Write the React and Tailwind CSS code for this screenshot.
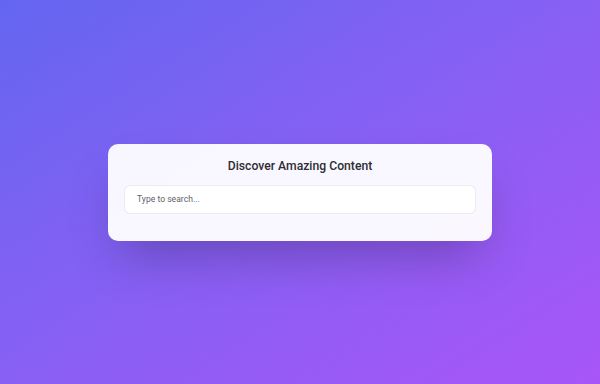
export default function App() {
  return (
    <div
      className="min-h-screen w-full bg-gradient-to-br from-[#6366f1] to-[#a855f7] flex items-center justify-center"
      style={{ fontFamily: 'Roboto, "Noto Sans", sans-serif' }}
    >
      <div className="w-[384px] rounded-[10px] bg-white/95 shadow-2xl px-4 pt-[12px] pb-[27px]">
        <h2 className="text-center text-[12.2px] font-medium leading-5 text-[#2d2d33]">
          Discover Amazing Content
        </h2>
        <input
          type="text"
          placeholder="Type to search..."
          className="mt-[9px] w-full h-[29px] rounded-md border border-gray-200/80 bg-white px-3 text-[8.6px] text-gray-700 placeholder-[#5f5f68] outline-none"
        />
      </div>
    </div>
  )
}
